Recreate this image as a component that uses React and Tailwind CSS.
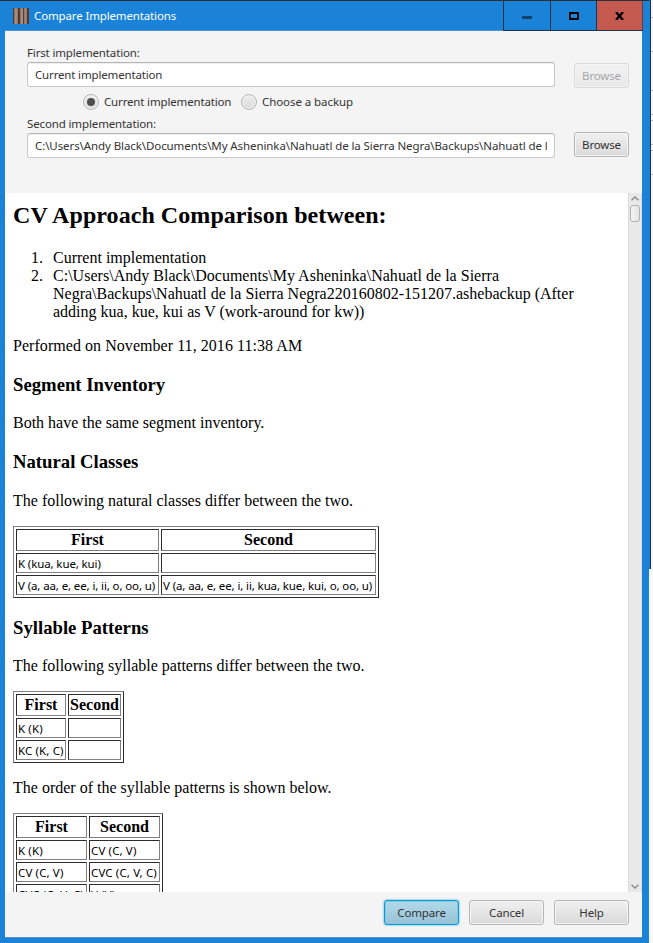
import React from "react";

const UI = "font-['Noto_Sans','Open_Sans',sans-serif] text-[11.5px]";

function Button({ children, className = "", primary = false }) {
  const tone = primary
    ? "border-[#039ed3] from-[#b1d9ea] to-[#98c3d6] shadow-[inset_0_0_0_1px_#8ac6df,0_0_2px_#039ed3]"
    : "border-[#b5b5b5] from-[#f0f0f0] to-[#dadada] shadow-[inset_0_0_0_1px_#f6f6f6]";
  return (
    <button
      className={`flex h-[25px] shrink-0 items-center justify-center rounded-[3px] border bg-linear-to-b text-[#333] tracking-[-0.15px] ${tone} ${className}`}
    >
      {children}
    </button>
  );
}

function Field({ children, className = "" }) {
  return (
    <div className="h-[25px] w-[528px] rounded-[3px] border border-[#c8c8c8] border-t-[#b5b5b5] bg-white px-[7px] leading-[24px] shadow-[inset_0_1px_1px_#eeeeee]">
      <div className={`h-[23px] overflow-hidden whitespace-nowrap text-[#333] ${className}`}>{children}</div>
    </div>
  );
}

function Radio({ checked, label, className }) {
  return (
    <label className="flex items-center gap-[5px]">
      <span className="flex size-4 items-center justify-center rounded-full border border-[#b5b5b5] bg-linear-to-b from-[#efefef] to-[#dadada] shadow-[inset_0_0_0_1px_#f3f3f3]">
        {checked && <span className="size-2 rounded-full bg-[#4d4d4d]" />}
      </span>
      <span className={`whitespace-nowrap ${className}`}>{label}</span>
    </label>
  );
}

function CompareTable({ widths, rows, tracking = "tracking-[0.13px]" }) {
  const total = widths[0] + widths[1] + 8;
  const cell = "border border-t-[#2c2c2c] border-l-[#2c2c2c] border-b-[#808080] border-r-[#808080] p-0";
  return (
    <table
      className="table-fixed border-separate border-spacing-[2px] border border-t-[#808080] border-l-[#808080] border-b-[#2c2c2c] border-r-[#2c2c2c]"
      style={{ width: total }}
    >
      <colgroup>
        <col style={{ width: widths[0] }} />
        <col style={{ width: widths[1] }} />
      </colgroup>
      <thead>
        <tr className="h-[22px]">
          <th className={`${cell} leading-[18px]`}>First</th>
          <th className={`${cell} leading-[18px]`}>Second</th>
        </tr>
      </thead>
      <tbody>
        {rows.map((row, i) => (
          <tr key={i} className="h-[20px]">
            {row.map((text, j) => (
              <td key={j} className={`${cell} ${UI} ${tracking} whitespace-nowrap pt-px pl-px leading-[17px]`}>
                {text}
              </td>
            ))}
          </tr>
        ))}
      </tbody>
    </table>
  );
}

function Heading({ children }) {
  return <h3 className="my-[18.72px] text-[18.72px] leading-[22px] font-bold">{children}</h3>;
}

function ListItem({ marker, children }) {
  return (
    <li className="flex gap-[9px]">
      <span className="w-[31px] shrink-0 pr-px text-right">{marker}</span>
      <div className="whitespace-nowrap">{children}</div>
    </li>
  );
}

function Report() {
  return (
    <div className="h-full min-w-0 flex-1 overflow-hidden bg-white px-2 pt-[9px] font-['Liberation_Serif',serif] text-[16px] leading-[18px] text-black">
      <h2 className="mb-5 text-[24px] leading-[27px] font-bold tracking-[0.06px]">CV Approach Comparison between:</h2>
      <ol>
        <ListItem marker="1.">Current implementation</ListItem>
        <ListItem marker="2.">
          <span className="tracking-[0.02px]">C:\Users\Andy Black\Documents\My Asheninka\Nahuatl de la Sierra</span>
          <br />
          Negra\Backups\Nahuatl de la Sierra Negra220160802-151207.ashebackup (After
          <br />
          adding kua, kue, kui as V (work-around for kw))
        </ListItem>
      </ol>
      <p className="mt-4 tracking-[0.05px]">Performed on November 11, 2016 11:38 AM</p>
      <Heading>Segment Inventory</Heading>
      <p>Both have the same segment inventory.</p>
      <Heading>Natural Classes</Heading>
      <p className="mb-4">The following natural classes differ between the two.</p>
      <CompareTable
        widths={[143, 215]}
        tracking="tracking-[-0.12px]"
        rows={[
          ["K (kua, kue, kui)", ""],
          ["V (a, aa, e, ee, i, ii, o, oo, u)", "V (a, aa, e, ee, i, ii, kua, kue, kui, o, oo, u)"],
        ]}
      />
      <Heading>Syllable Patterns</Heading>
      <p className="mb-4">The following syllable patterns differ between the two.</p>
      <CompareTable widths={[50, 53]} rows={[["K (K)", ""], ["KC (K, C)", ""]]} />
      <p className="my-4">The order of the syllable patterns is shown below.</p>
      <CompareTable
        widths={[71, 71]}
        rows={[
          ["K (K)", "CV (C, V)"],
          ["CV (C, V)", "CVC (C, V, C)"],
          ["CVC (C, V, C)", "V (V)"],
        ]}
      />
    </div>
  );
}

function Chevron({ up }) {
  return (
    <svg width="8" height="5" viewBox="0 0 8 5" fill="none" stroke="#8c8c8c" strokeWidth="1.5">
      <path d={up ? "M.5 4.2 4 1 7.5 4.2" : "M.5 .8 4 4 7.5 .8"} />
    </svg>
  );
}

function TitleBar() {
  return (
    <div className="flex h-[31px] w-[649px] border-t border-[#2b2f36] pr-[6px]">
      <div className="ml-[5px] flex flex-1 items-center gap-[5px] border-b border-[#4b94cf] pl-[8px] text-white">
        <svg width="16" height="16" viewBox="0 0 16 16">
          <rect width="16" height="16" fill="#8d7466" />
          <path fill="#4c3a34" d="M0 0h1v16H0zM5 0h2v16H5zM10 0h1v16h-1zM14 0h2v16h-2z" />
          <path fill="#a88c78" d="M2 1h2v15H2zM8 1h2v15H8zM12 1h1v15h-1z" />
        </svg>
        <span className="pt-px tracking-[-0.14px]">Compare Implementations</span>
      </div>
      <div className="flex h-[30px] w-[140px] border-b border-l border-[#1d344b]">
        <div className="flex w-[47px] items-center justify-center border-r border-[#1d344b]">
          <span className="mt-1 h-[3px] w-[10px] bg-[#0f4470]" />
        </div>
        <div className="flex w-[46px] items-center justify-center border-r border-[#1d344b]">
          <span className="h-2 w-[10px] border-2 border-black" />
        </div>
        <div className="flex w-[46px] items-center justify-center border-r border-[#6b3d3d] bg-[#c3594f]">
          <svg width="9" height="8" viewBox="0 0 9 8" stroke="#000" strokeWidth="2.2">
            <path d="M1 0 8 8M8 0 1 8" />
          </svg>
        </div>
      </div>
    </div>
  );
}

const BACKDROP_LINES = [18, 34, 39, 24, 6, 24, 6, 24];

export default function App() {
  return (
    <div className={`flex h-[943px] w-[653px] overflow-hidden bg-[#f7f7f7] leading-4 ${UI}`}>
      <div className="flex h-full w-[649px] shrink-0 flex-col bg-[#1a83d8]">
        <TitleBar />
        <div className="ml-[5px] flex h-[907px] w-[637px] flex-col border-b border-[#4f8fc4] bg-[#f4f4f4] text-[#333]">
          <div className="h-[162px] shrink-0 pt-[14px] pl-[22px]">
            <div className="h-[17px] leading-[15px] tracking-[-0.15px]">First implementation:</div>
            <div className="flex gap-[19px]">
              <Field className="tracking-[-0.16px]">Current implementation</Field>
              <Button className="mt-px w-[55px] opacity-40">Browse</Button>
            </div>
            <div className="mt-[6px] ml-[56px] flex h-4 gap-[10px]">
              <Radio checked label="Current implementation" className="w-[127px] tracking-[-0.16px]" />
              <Radio label="Choose a backup" className="tracking-[-0.07px]" />
            </div>
            <div className="mt-[6px] h-[16px] leading-[15px] tracking-[-0.13px]">Second implementation:</div>
            <div className="flex gap-[19px]">
              <div className="pt-px">
                <Field className="tracking-[-0.09px]">
                  C:\Users\Andy Black\Documents\My Asheninka\Nahuatl de la Sierra Negra\Backups\Nahuatl de la
                </Field>
              </div>
              <Button className="w-[55px]">Browse</Button>
            </div>
          </div>
          <div className="flex h-[699px] shrink-0">
            <Report />
            <div className="flex w-[14px] flex-col items-center justify-between border-x border-[#dadada] bg-[#e9e9e9] pt-[3px] pb-[3px]">
              <div className="flex flex-col items-center gap-1">
                <Chevron up />
                <div className="h-[17px] w-[10px] rounded-[3px] border border-[#b0b0b0] bg-linear-to-r from-[#f3f3f3] to-[#e4e4e4]" />
              </div>
              <Chevron />
            </div>
          </div>
          <div className="flex justify-end gap-[10px] pt-2 pr-[13px]">
            <Button primary className="w-[75px]">Compare</Button>
            <Button className="w-[75px]">Cancel</Button>
            <Button className="w-[75px]">Help</Button>
          </div>
        </div>
      </div>
      <div className="h-[569px] w-px bg-[#1a83d8]" />
      <div className="h-[569px] w-px bg-[#25303d]" />
      <div className="flex w-[2px] flex-col">
        {BACKDROP_LINES.map((h, i) => (
          <div key={i} className="border-b border-[#b9b9b9]" style={{ height: h }} />
        ))}
      </div>
    </div>
  );
}
